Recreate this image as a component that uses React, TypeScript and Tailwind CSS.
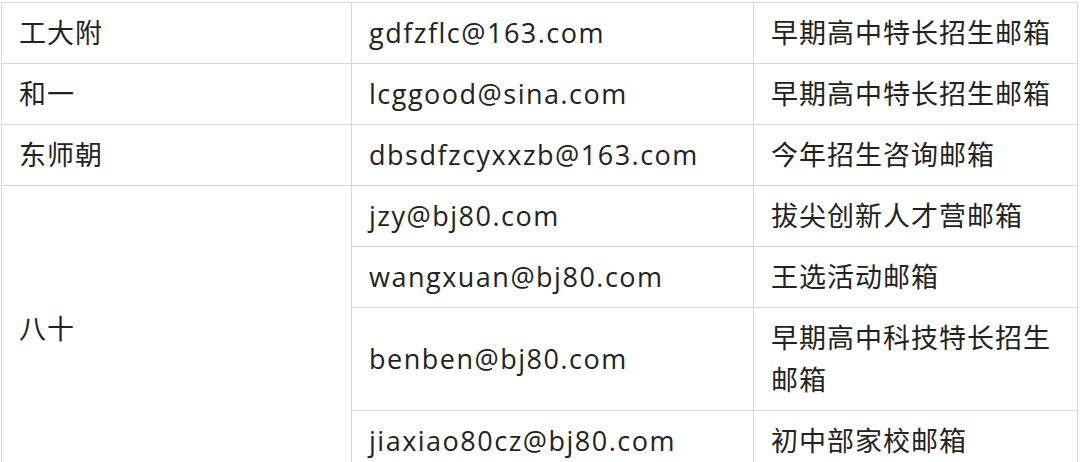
const rows: { school?: string; span?: number; email: string; note: string }[] = [
  { school: "工大附", email: "gdfzflc@163.com", note: "早期高中特长招生邮箱" },
  { school: "和一", email: "lcggood@sina.com", note: "早期高中特长招生邮箱" },
  { school: "东师朝", email: "dbsdfzcyxxzb@163.com", note: "今年招生咨询邮箱" },
  { school: "八十", span: 4, email: "jzy@bj80.com", note: "拔尖创新人才营邮箱" },
  { email: "wangxuan@bj80.com", note: "王选活动邮箱" },
  { email: "benben@bj80.com", note: "早期高中科技特长招生邮箱" },
  { email: "jiaxiao80cz@bj80.com", note: "初中部家校邮箱" },
];

const cell =
  "border border-[#d8d8d8] px-[17px] py-[9px] align-middle text-left font-normal";

export default function App() {
  return (
    <div
      className="w-[1080px] h-[462px] overflow-hidden bg-white pl-[1px] pt-[2px] text-[#222] text-[27px] leading-[42px] tracking-[1px]"
      style={{ fontFamily: '"Open Sans", "Noto Sans CJK SC", sans-serif' }}
    >
      <table className="border-collapse table-fixed w-[1076px]">
        <colgroup>
          <col className="w-[350px]" />
          <col className="w-[402px]" />
          <col className="w-[324px]" />
        </colgroup>
        <tbody>
          {rows.map((r, i) => (
            <tr key={i}>
              {r.school && (
                <td className={cell} rowSpan={r.span ?? 1}>
                  {r.school}
                </td>
              )}
              <td className={`${cell} tracking-[1.5px]`}>{r.email}</td>
              <td className={cell}>{r.note}</td>
            </tr>
          ))}
        </tbody>
      </table>
    </div>
  );
}
